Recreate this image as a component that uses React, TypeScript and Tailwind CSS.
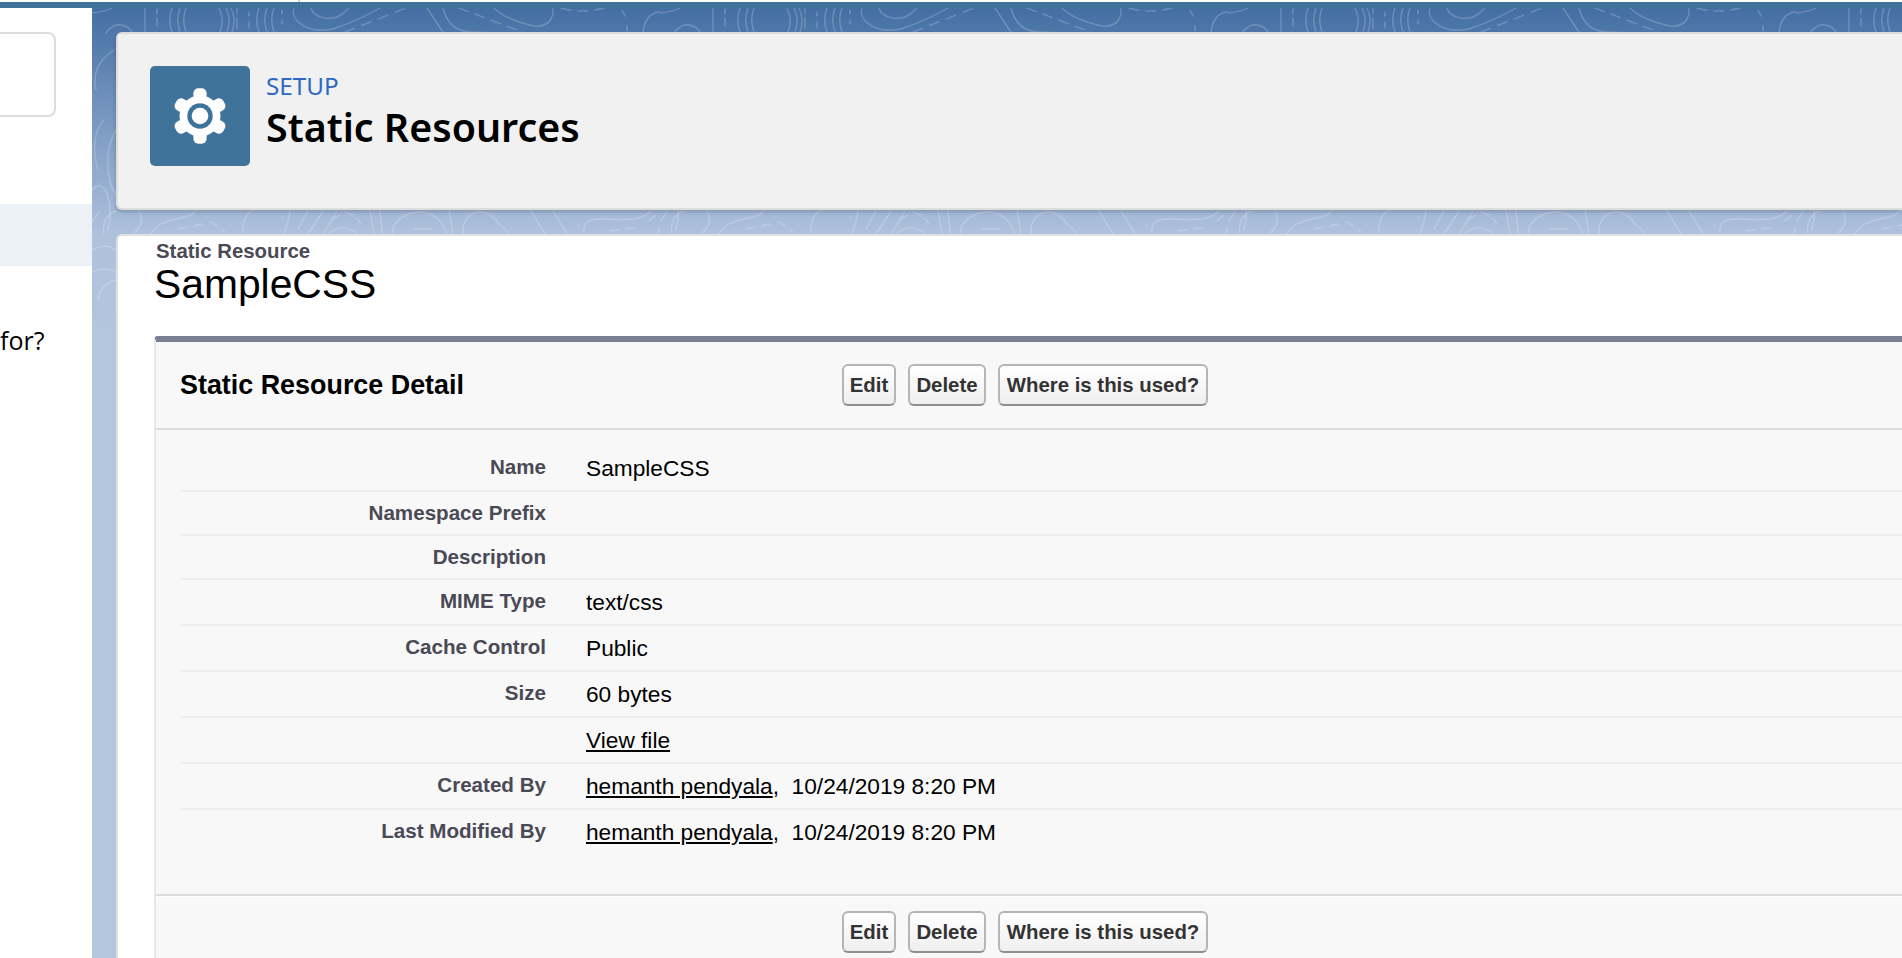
const arial = "font-['Liberation_Sans',Arial,sans-serif]";

const gearTeeth = [0, 60, 120, 180, 240, 300];

const rows = [
  { label: 'Name', value: 'SampleCSS', rowClass: 'h-[62px] pt-[16px]' },
  { label: 'Namespace Prefix', rowClass: 'h-[44px]' },
  { label: 'Description', rowClass: 'h-[44px]' },
  { label: 'MIME Type', value: 'text/css', rowClass: 'h-[46px]' },
  { label: 'Cache Control', value: 'Public', rowClass: 'h-[46px]' },
  { label: 'Size', value: '60 bytes', rowClass: 'h-[46px]' },
  { label: '', link: 'View file', rowClass: 'h-[46px]' },
  { label: 'Created By', link: 'hemanth pendyala', date: '10/24/2019 8:20 PM', rowClass: 'h-[46px]' },
  { label: 'Last Modified By', link: 'hemanth pendyala', date: '10/24/2019 8:20 PM', rowClass: 'h-[84px]', last: true },
];

const buttons = [
  { text: 'Edit', width: 'w-[54px]' },
  { text: 'Delete', width: 'w-[78px]' },
  { text: 'Where is this used?', width: 'w-[210px]' },
];

function GearIcon() {
  return (
    <svg viewBox="-30 -30 60 60" className="w-[60px] h-[60px]">
      <circle r="20.5" fill="#fff" />
      {gearTeeth.map((deg) => (
        <rect key={deg} x="-6.6" y="-27.7" width="13.2" height="20" rx="5" fill="#fff" transform={`rotate(${deg})`} />
      ))}
      <circle r="12.7" fill="#3f7399" />
      <circle r="8.3" fill="#fff" />
    </svg>
  );
}

// contour lines of the setup backdrop, the tile repeats every 568px
function Contours() {
  return (
    <svg className="absolute left-0 top-0 w-full h-full" aria-hidden="true">
      <defs>
        <pattern id="topo" x="0" y="-8" width="568" height="958" patternUnits="userSpaceOnUse">
          <g fill="none" stroke="#fff" strokeOpacity="0.2" strokeWidth="1.4" strokeLinecap="round">
            <path d="M0 13C8 12 15 11 20 8" />
            <path d="M14 33C18 27 24 24 29 25C34 26 38 28 40 32" />
            <path d="M53 8V32M65 8V14M65 18V26M80 8C77 16 77 24 80 32M88 8C85 16 85 24 88 32M94 8C91 16 91 24 94 32" />
            <path d="M127 8C131 16 131 24 128 32M134 8C138 16 138 24 135 32M139 8C143 16 143 24 140 32M145 8V14M145 18V28" />
            <path d="M157 12V16M157 22V28M167 8C164 16 164 24 167 32M175 8C172 16 172 24 175 32M182 8C179 16 179 24 182 32" />
            <path d="M190 10V14M190 20V24" />
            <path d="M202 8C198 22 218 34 240 29C258 24 274 16 288 8" />
            <path d="M219 8C222 18 236 20 245 17C250 15 254 11 257 8" />
            <path d="M253 32L314 8" strokeDasharray="10 8" />
            <path d="M335 8L351 32M351 8C354 20 362 32 380 32L408 33" />
            <path d="M367 8L433 33" strokeDasharray="10 7" />
            <path d="M402 8C412 18 428 23 442 26C455 27 462 20 461 8" />
            <path d="M469 8C480 12 498 12 512 8" strokeDasharray="10 7" />
            <path d="M530 10L533 16M535 26V31" />
            <path d="M551 33C552 22 556 14 566 12L568 12" />
            <path d="M12 120C2 130 0 150 6 170M0 190C14 175 22 205 16 230M22 50C6 60 0 75 4 90M24 130C12 150 14 180 24 195M0 250C12 244 18 246 24 250M0 272C8 268 18 268 24 272M6 300C8 290 14 282 24 280" />
            <path d="M47 211C52 220 48 228 41 234M12 234C10 224 14 214 24 211" />
            <path d="M59 234C63 224 76 220 94 217C99 216 102 213 104 210" />
            <path d="M86 229L120 222L133 232" strokeDasharray="9 7" />
            <path d="M151 233C150 224 153 215 161 210M198 210C197 218 195 226 192 233" />
            <path d="M206 229L216 211M216 234L231 211M231 234L245 211" />
            <path d="M241 219L253 212L263 216L269 224" strokeDasharray="8 6" />
            <path d="M237 234C242 228 254 224 265 234" />
            <path d="M278 210L282 234M288 210L290 234" />
            <path d="M300 234C301 224 306 214 327 212C342 212 351 222 355 234M322 229L339 229M357 210L361 234" />
            <path d="M371 234C370 222 376 212 388 212C400 212 405 222 408 225C412 228 415 231 416 234" />
            <path d="M439 211L453 234M461 211L475 234" />
            <path d="M492 234C491 222 496 219 510 219C530 220 548 222 559 211" />
            <path d="M518 231L547 227M557 221L568 212" strokeDasharray="9 7" />
            <path d="M565 234L568 228M0 222L7 212" />
          </g>
        </pattern>
      </defs>
      <rect width="100%" height="100%" fill="url(#topo)" />
    </svg>
  );
}

function ActionButtons() {
  return (
    <div className="flex gap-[12px]">
      {buttons.map((btn) => (
        <button
          key={btn.text}
          className={`${arial} ${btn.width} h-[42px] rounded-[6px] border-2 border-[#b5b5b5] border-b-[#8f8f8f] bg-gradient-to-b from-white to-[#efefef] text-[20.4px] font-bold text-[#333]`}
        >
          {btn.text}
        </button>
      ))}
    </div>
  );
}

export default function App() {
  return (
    <div className="w-[1902px] h-[958px] overflow-hidden bg-white flex flex-col">
      <div className="h-[2px] bg-white pl-[298px]">
        <div className="w-[2px] h-[2px] bg-[#d4d4d4]" />
      </div>
      <div className="h-[6px] bg-[#3f7399]" />

      <div className="flex flex-1 min-h-0">
        {/* left tree panel, cut off by the screenshot */}
        <div className="w-[92px] shrink-0 bg-white pt-[24px]">
          <div className="w-[56px] h-[85px] border-2 border-l-0 border-[#dddddd] rounded-r-[8px]" />
          <div className="h-[62px] mt-[87px] bg-[#ecf1f5]" />
          <p className="mt-[59px] font-['Open_Sans',sans-serif] text-[25px] leading-[30px] text-black">for?</p>
        </div>

        <div className="relative flex-1 min-w-0 overflow-hidden bg-[linear-gradient(180deg,#446fa3_0px,#aec1dd_226px,#b4c5de_320px)]">
          <Contours />

          <div className="relative pl-[24px] pt-[24px]">
            <div className="h-[178px] flex gap-[16px] pl-[32px] pt-[32px] bg-[#f1f1f1] border-2 border-r-0 border-[#dddddd] rounded-l-[6px] shadow-[0_2px_4px_rgba(0,0,0,0.2)]">
              <div className="w-[100px] h-[100px] rounded-[5px] bg-[#3f7399] flex items-center justify-center">
                <GearIcon />
              </div>
              <div className="pt-[4px] font-['Noto_Sans',sans-serif]">
                <div className="text-[24.3px] leading-[32px] text-[#2f68c4]">SETUP</div>
                <div className="text-[39.4px] leading-[50px] font-semibold text-black">Static Resources</div>
              </div>
            </div>

            <div className={`${arial} mt-[24px] h-[800px] pl-[37px] pt-[4px] bg-white border-t-2 border-l-2 border-[#e0e0e0] rounded-tl-[6px]`}>
              <div className="pl-[1px] text-[20.4px] leading-[23px] font-bold text-[#4a4a56]">Static Resource</div>
              <h1 className="-ml-[1px] text-[40.8px] leading-[42px] text-black">SampleCSS</h1>

              <div className="-ml-[1px] mt-[31px] bg-[#f8f8f8] border-t-[6px] border-t-[#7a8092] border-l-2 border-l-[#e8e8e8] rounded-tl-[4px]">
                <div className="h-[88px] flex items-center border-b-2 border-[#dddddd]">
                  <h2 className="w-[686px] pl-[24px] text-[26.9px] font-bold text-black">Static Resource Detail</h2>
                  <ActionButtons />
                </div>

                <div className="pl-[24px]">
                  {rows.map((row) => (
                    <div key={row.label + row.rowClass} className={`${row.rowClass} flex ${row.last ? '' : 'border-b-2 border-[#eeeeee]'}`}>
                      <div className="w-[366px] pt-[9px] text-right text-[20.6px] leading-[23px] font-bold text-[#4a4a56]">{row.label}</div>
                      <div className="ml-[40px] pt-[10px] text-[22.7px] leading-[25px] text-black">
                        {row.value}
                        {row.link && <a className="underline">{row.link}</a>}
                        {row.date && <span>,&nbsp;&nbsp;{row.date}</span>}
                      </div>
                    </div>
                  ))}
                </div>

                <div className="h-[3px] border-b border-white bg-[#dddddd]" />
                <div className="h-[120px] pt-[14px] pl-[686px]">
                  <ActionButtons />
                </div>
              </div>
            </div>
          </div>
        </div>
      </div>
    </div>
  );
}
